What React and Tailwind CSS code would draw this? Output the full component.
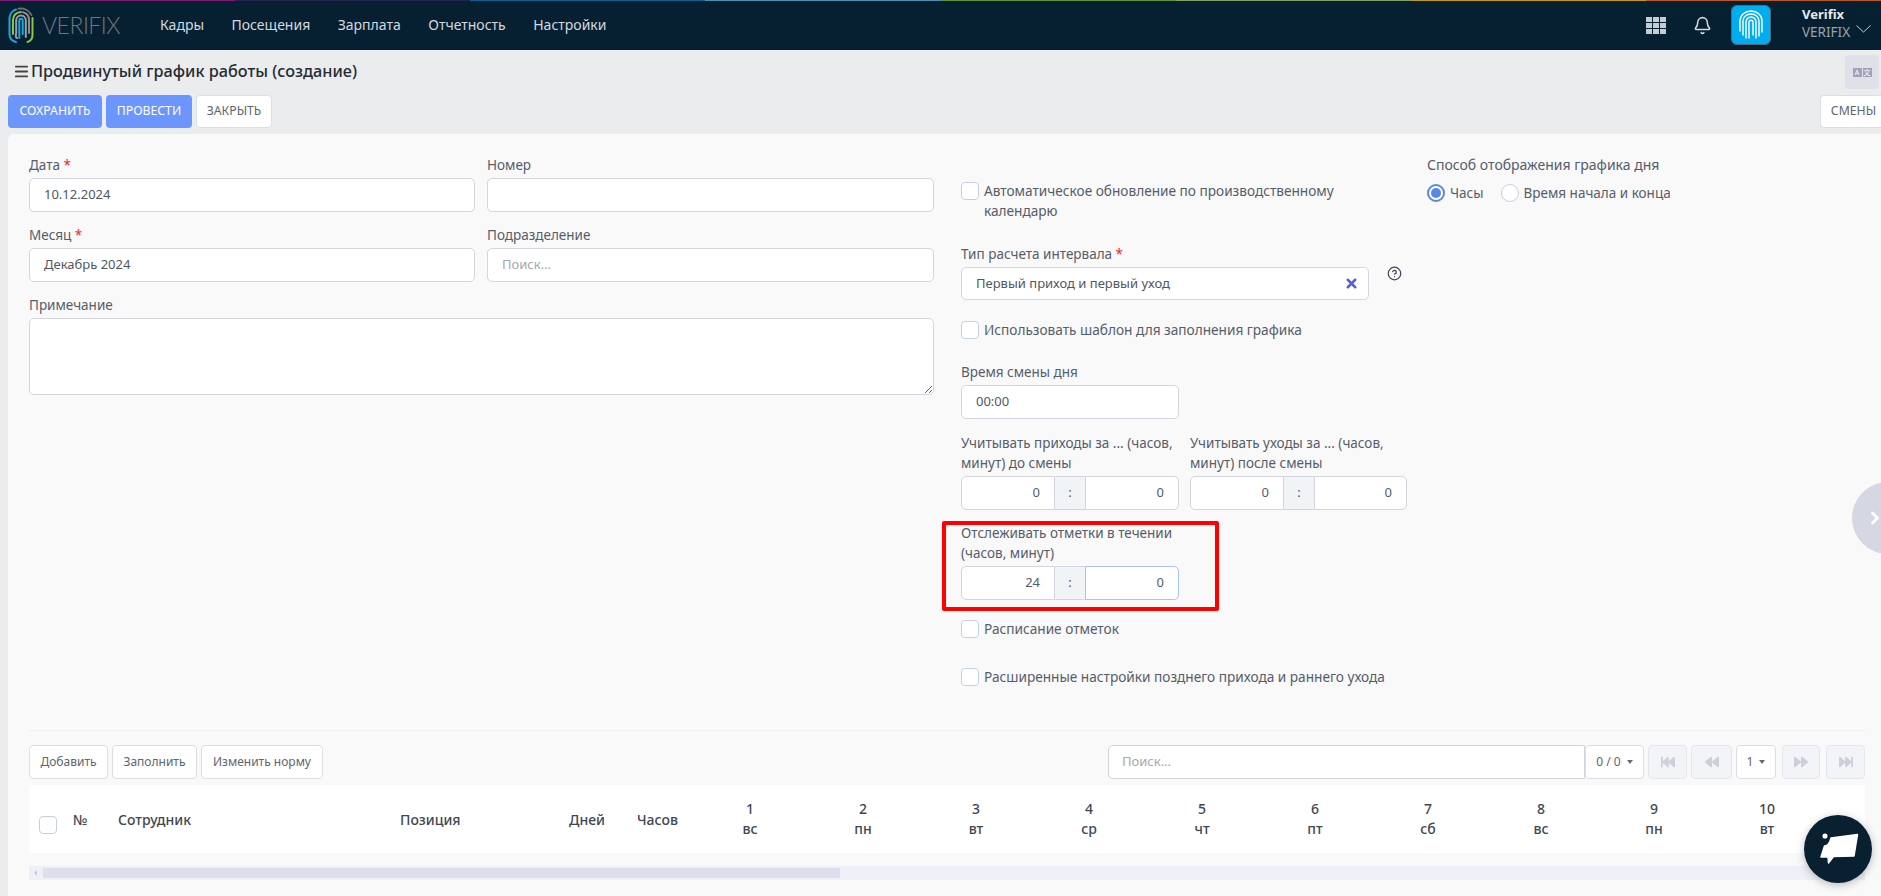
import { Bell, ChevronRight, CircleHelp, Menu, X } from 'lucide-react'
import { FaBackward, FaFastBackward, FaFastForward, FaForward } from 'react-icons/fa'

const navItems = ['Кадры', 'Посещения', 'Зарплата', 'Отчетность', 'Настройки']
const stripe = ['bg-[#7d1a73]', 'bg-[#22264f]', 'bg-[#0b5f93]', 'bg-[#4c8fb5]', 'bg-[#5f9431]', 'bg-[#85a063]', 'bg-[#c09a12]', 'bg-[#b9591c]']
const days = [['1', 'вс'], ['2', 'пн'], ['3', 'вт'], ['4', 'ср'], ['5', 'чт'], ['6', 'пт'], ['7', 'сб'], ['8', 'вс'], ['9', 'пн'], ['10', 'вт']]

function Logo() {
  return (
    <svg width="26" height="37" viewBox="0 0 26 37" fill="none" strokeLinecap="round" strokeWidth="2">
      <path d="M8 35C3.500 34 1.500 31 1.500 27V12C1.500 7.500 4 3.500 8 2.500" stroke="#1aa9e0" />
      <path d="M10.500 1.800C16 0.800 21 3.500 23.500 8" stroke="#6b7076" />
      <path d="M24.500 11V28C24.500 31 22.500 34 19.500 35" stroke="#8fc43a" />
      <path d="M5 27V13C5 8.500 8.500 5 13 5" stroke="#8fc43a" />
      <path d="M15 5.200C18.500 6 21 9 21 13V26" stroke="#8a8f94" />
      <path d="M9 31C6.800 30 8 28 8.200 26V13.500C8.200 10.500 10.500 8.500 13 8.500C15.500 8.500 17.800 10.500 17.800 13.500V30" stroke="#9ba0a5" />
      <path d="M11.300 31V14C11.300 11 14.700 11 14.700 14V27" stroke="#1aa9e0" />
    </svg>
  )
}

function Fingerprint() {
  return (
    <svg width="24" height="30" viewBox="0 0 24 30" fill="none" stroke="#fff" strokeWidth="1.400" strokeLinecap="round">
      <path d="M1 21V11C1 5 6 1 12 1C18 1 23 5 23 11V22" />
      <path d="M4 25V11.500C4 7 7.500 4 12 4C16.500 4 20 7 20 11.500V26" />
      <path d="M7 28V12C7 9 9.500 7 12 7C14.500 7 17 9 17 12V28" />
      <path d="M10 28V12.500C10 9.500 14 9.500 14 12.500V25" />
    </svg>
  )
}

function Header() {
  return (
    <header className="h-[50px] bg-[#062032] relative shrink-0">
      <div className="absolute inset-x-0 top-0 h-[1px] flex">
        {stripe.map(c => <div key={c} className={`flex-1 ${c}`} />)}
      </div>
      <div className="h-full flex items-center pl-[8px]">
        <Logo />
        <span className="ml-[8px] w-[80px] text-[23px] tracking-[-0.5px] font-light text-[#70757a] font-['Lato',sans-serif]">VERIFIX</span>
        <nav className="flex ml-[38px] -mt-[1px] gap-[27.500px] text-[14px] text-[#d3d9de]">
          {navItems.map(n => <span key={n}>{n}</span>)}
        </nav>
        <div className="ml-auto flex items-center">
          <svg width="20" height="17" viewBox="0 0 20 17" fill="#c5ccd3">
            <rect x="0" y="0" width="6" height="5" /><rect x="7" y="0" width="6" height="5" /><rect x="14" y="0" width="6" height="5" />
            <rect x="0" y="6" width="6" height="5" /><rect x="7" y="6" width="6" height="5" /><rect x="14" y="6" width="6" height="5" />
            <rect x="0" y="12" width="6" height="5" /><rect x="7" y="12" width="6" height="5" /><rect x="14" y="12" width="6" height="5" />
          </svg>
          <Bell size={19} className="ml-[27px] text-[#cfd5da]" />
          <div className="ml-[19px] w-[40px] h-[40px] rounded-md bg-[#00adef] border border-[#55697a] flex items-center justify-center"><Fingerprint /></div>
          <div className="ml-[31px] -mt-[4px] w-[79px] relative">
            <div className="text-[13px] leading-[18px] font-bold text-[#e6eaee]">Verifix</div>
            <div className="text-[13.500px] leading-[18px] text-[#9aa3ab]">VERIFIX</div>
            <svg className="absolute right-[10px] top-[20px]" width="15" height="8" viewBox="0 0 15 8" fill="none" stroke="#c5ccd3"><path d="M0.500 0.500L7.500 7L14.500 0.500" /></svg>
          </div>
        </div>
      </div>
    </header>
  )
}

function ActionButton({ children, primary, className = '' }) {
  return (
    <button className={`h-[33px] rounded-[4px] text-[12.250px] flex items-center justify-center ${primary ? 'bg-[#6c96fd] text-white' : 'bg-white text-[#5e6570] border border-[#dcdee4]'} ${className}`}>
      {children}
    </button>
  )
}

function Label({ children, required }) {
  return (
    <div className="text-[13.500px] leading-[20px] text-[#555d6b] mb-[3px]">
      {children}{required && <span className="text-[#f5222d]"> *</span>}
    </div>
  )
}

function TextBox({ value, placeholder, className = '' }) {
  return (
    <div className={`h-[34px] bg-white border border-[#d3d6e0] rounded-[5px] px-[14px] flex items-center text-[13px] ${value ? 'text-[#4f5765]' : 'text-[#a3a8b2]'} ${className}`}>
      {value || placeholder}
    </div>
  )
}

function Check({ children, className = '' }) {
  return (
    <div className={`flex text-[13.650px] leading-[20px] text-[#555d6b] ${className}`}>
      <span className="w-[18px] h-[18px] shrink-0 mt-[1px] mr-[5px] rounded-[4px] border border-[#c5cfe6] bg-white" />
      <span>{children}</span>
    </div>
  )
}

function TimeGroup({ hours, minutes, focus }) {
  return (
    <div className="flex h-[34px] text-[13px] text-[#555d6b]">
      <div className="w-[94px] bg-white border border-[#d3d6e0] rounded-l-[5px] flex items-center justify-end pr-[14px]">{hours}</div>
      <div className="w-[30px] bg-[#f1f4f7] border-y border-[#d3d6e0] flex items-center justify-center">:</div>
      <div className={`flex-1 bg-white border rounded-r-[5px] flex items-center justify-end pr-[14px] ${focus ? 'border-[#a9c2f5]' : 'border-[#d3d6e0]'}`}>{minutes}</div>
    </div>
  )
}

function PagerButton({ children, className = '' }) {
  return <div className={`h-[34px] rounded-[4px] bg-[#f3f4f7] border border-[#e6e7ec] flex items-center justify-center text-[#cdd0d9] text-[14px] ${className}`}>{children}</div>
}

function Caret() {
  return <span className="ml-[6px] w-0 h-0 border-x-[3px] border-x-transparent border-t-[4px] border-t-[#666c76]" />
}

function Form() {
  return (
    <div className="flex">
      <div className="w-[905px] pt-[21px]">
        <div className="grid grid-cols-[446px_447px] gap-x-[12px] gap-y-[13px]">
          <div><Label required>Дата</Label><TextBox value="10.12.2024" /></div>
          <div><Label>Номер</Label><TextBox /></div>
          <div><Label required>Месяц</Label><TextBox value="Декабрь 2024" /></div>
          <div><Label>Подразделение</Label><TextBox placeholder="Поиск..." /></div>
          <div className="col-span-2">
            <Label>Примечание</Label>
            <textarea className="block w-full h-[77px] bg-white border border-[#d3d6e0] rounded-[5px]" />
          </div>
        </div>
      </div>

      <div className="w-[446px] ml-[27px] pt-[47px]">
        <Check className="w-[400px]">Автоматическое обновление по производственному календарю</Check>
        <div className="mt-[23px] relative">
          <Label required>Тип расчета интервала</Label>
          <div className="w-[408px] h-[33px] bg-white border border-[#d3d6e0] rounded-[5px] pl-[14px] pr-[9px] flex items-center justify-between text-[13px] text-[#4f5765]">
            Первый приход и первый уход
            <X size={15} strokeWidth={4} className="text-[#5a5fd0]" />
          </div>
          <CircleHelp size={15} strokeWidth={2} className="absolute left-[426px] top-[22px] text-[#3d4650]" />
        </div>
        <Check className="mt-[20px]">Использовать шаблон для заполнения графика</Check>
        <div className="mt-[22px]">
          <Label>Время смены дня</Label>
          <TextBox value="00:00" className="w-[218px]" />
        </div>
        <div className="mt-[14px] grid grid-cols-[218px_217px] gap-x-[11px]">
          <div><Label>Учитывать приходы за ... (часов, минут) до смены</Label><TimeGroup hours="0" minutes="0" /></div>
          <div><Label>Учитывать уходы за ... (часов, минут) после смены</Label><TimeGroup hours="0" minutes="0" /></div>
        </div>
        <div className="mt-[13px] w-[218px] relative">
          <Label>Отслеживать отметки в течении (часов, минут)</Label>
          <TimeGroup hours="24" minutes="0" focus />
          <div className="absolute left-[-19px] top-[-2px] w-[277px] h-[90px] border-[4px] border-[#ff0000] rounded-[2px] pointer-events-none" />
        </div>
        <Check className="mt-[19px]">Расписание отметок</Check>
        <Check className="mt-[28px]">Расширенные настройки позднего прихода и раннего ухода</Check>
      </div>

      <div className="ml-[20px] pt-[21px] text-[13.500px] text-[#555d6b]">
        <div className="leading-[20px] text-[14px]">Способ отображения графика дня</div>
        <div className="flex items-center mt-[8px] leading-[20px]">
          <span className="w-[18px] h-[18px] rounded-full border-[2px] border-[#5a86e6] bg-white flex items-center justify-center">
            <span className="w-[10px] h-[10px] rounded-full bg-[#5a86e6]" />
          </span>
          <span className="ml-[5px]">Часы</span>
          <span className="ml-[17px] w-[18px] h-[18px] rounded-full border border-[#c5cfe6] bg-white" />
          <span className="ml-[5px]">Время начала и конца</span>
        </div>
      </div>
    </div>
  )
}

function Toolbar() {
  const left = [['Добавить', 'w-[79px]'], ['Заполнить', 'w-[85px]'], ['Изменить норму', 'w-[122px]']]
  return (
    <div className="flex justify-between mt-[14px] h-[34px] text-[12px] text-[#5e6570]">
      <div className="flex gap-[4px]">
        {left.map(([t, w]) => (
          <button key={t} className={`${w} h-[34px] bg-white border border-[#dcdee4] rounded-[4px]`}>{t}</button>
        ))}
      </div>
      <div className="flex">
        <div className="w-[477px] bg-white border border-[#d3d6e0] rounded-l-[5px] pl-[13px] flex items-center text-[13px] text-[#a3a8b2]">Поиск...</div>
        <div className="w-[59px] bg-white border border-[#dcdee4] rounded-[4px] flex items-center justify-center">0 / 0<Caret /></div>
        <PagerButton className="w-[39px] ml-[4px]"><FaFastBackward /></PagerButton>
        <PagerButton className="w-[41px] ml-[4px]"><FaBackward /></PagerButton>
        <div className="w-[40px] ml-[4px] bg-white border border-[#dcdee4] rounded-[4px] flex items-center justify-center">1<Caret /></div>
        <PagerButton className="w-[38px] ml-[6px]"><FaForward /></PagerButton>
        <PagerButton className="w-[39px] ml-[6px]"><FaFastForward /></PagerButton>
      </div>
    </div>
  )
}

function TableHead() {
  return (
    <div className="mt-[6px] h-[68px] bg-white flex items-center text-[14px] font-medium text-[#3f4753] overflow-hidden">
      <div className="w-[44px] shrink-0 pl-[10px] pt-[12px]"><span className="block w-[18px] h-[18px] rounded-[4px] border border-[#c5cfe6] bg-white" /></div>
      <div className="w-[45px] shrink-0">№</div>
      <div className="w-[282px] shrink-0">Сотрудник</div>
      <div className="w-[169px] shrink-0">Позиция</div>
      <div className="w-[68px] shrink-0">Дней</div>
      <div className="w-[56.500px] shrink-0">Часов</div>
      {days.map(([d, w], i) => (
        <div key={i} className="w-[113px] shrink-0 text-center leading-[20px]">
          <div>{d}</div>
          <div>{w}</div>
        </div>
      ))}
    </div>
  )
}

function Scrollbar() {
  return (
    <div className="mt-[13px] h-[14px] bg-[#eef0f8] flex items-center">
      <span className="ml-[5px] w-0 h-0 border-y-[3px] border-y-transparent border-r-[3px] border-r-[#c8cbd8]" />
      <div className="ml-[6px] w-[797px] h-[10px] bg-[#dedfec]" />
    </div>
  )
}

export default function App() {
  return (
    <div className="w-[1881px] h-[896px] bg-[#ebecee] flex flex-col relative overflow-hidden font-['Noto_Sans',sans-serif]">
      <Header />
      <div className="flex justify-between h-[45px] shrink-0 pl-[13px] pr-[2px]">
        <div className="flex items-center gap-[1px] pb-[2px] text-[16.250px] font-medium text-[#262b33]">
          <Menu size={17} strokeWidth={2.500} className="text-[#444]" />
          Продвинутый график работы (создание)
        </div>
        <div className="mt-[5px] w-[34px] h-[34px] rounded-[4px] bg-[#dfe0e8] flex items-center justify-center gap-[1px]">
          <span className="w-[9px] h-[9px] bg-[#9ea2ba] text-white text-[7px] leading-[9px] text-center">A</span>
          <span className="w-[9px] h-[9px] bg-[#9ea2ba] text-white text-[7px] leading-[9px] text-center font-['Noto_Sans_CJK_SC',sans-serif]">文</span>
        </div>
      </div>
      <div className="flex shrink-0 pl-[8px] gap-[4px]">
        <ActionButton primary className="w-[94px]">СОХРАНИТЬ</ActionButton>
        <ActionButton primary className="w-[86px]">ПРОВЕСТИ</ActionButton>
        <ActionButton className="w-[76px]">ЗАКРЫТЬ</ActionButton>
        <ActionButton className="ml-auto w-[61px] rounded-r-none border-r-0 pl-[5px]">СМЕНЫ</ActionButton>
      </div>
      <main className="mt-[6px] ml-[8px] flex-1 bg-[#f9f9fa] rounded-tl-md pl-[21px] pr-[16px]">
        <Form />
        <div className="mt-[43px] border-t border-[#eef0f2]" />
        <Toolbar />
        <TableHead />
        <Scrollbar />
      </main>

      <div className="absolute left-[1852px] top-[482px] w-[72px] h-[72px] rounded-full bg-[#d5d8e2] flex items-center pl-[13px]">
        <ChevronRight size={20} strokeWidth={3.500} className="text-white" />
      </div>
      <div className="absolute left-[1804px] top-[815px] w-[68px] h-[68px] rounded-full bg-[#082030] shadow-[0_2px_8px_rgba(0,0,0,0.25)]">
        <svg width="68" height="68" viewBox="0 0 68 68" fill="#fff" stroke="#fff" strokeWidth="1.500" strokeLinejoin="round">
          <path d="M27 23L53.500 19.500L50 41L29.500 41.500L24.500 48L24 42L17 42L20.500 31C24 31 26 27.500 27 23Z" />
          <circle cx="21" cy="21" r="1.800" />
        </svg>
      </div>
    </div>
  )
}
